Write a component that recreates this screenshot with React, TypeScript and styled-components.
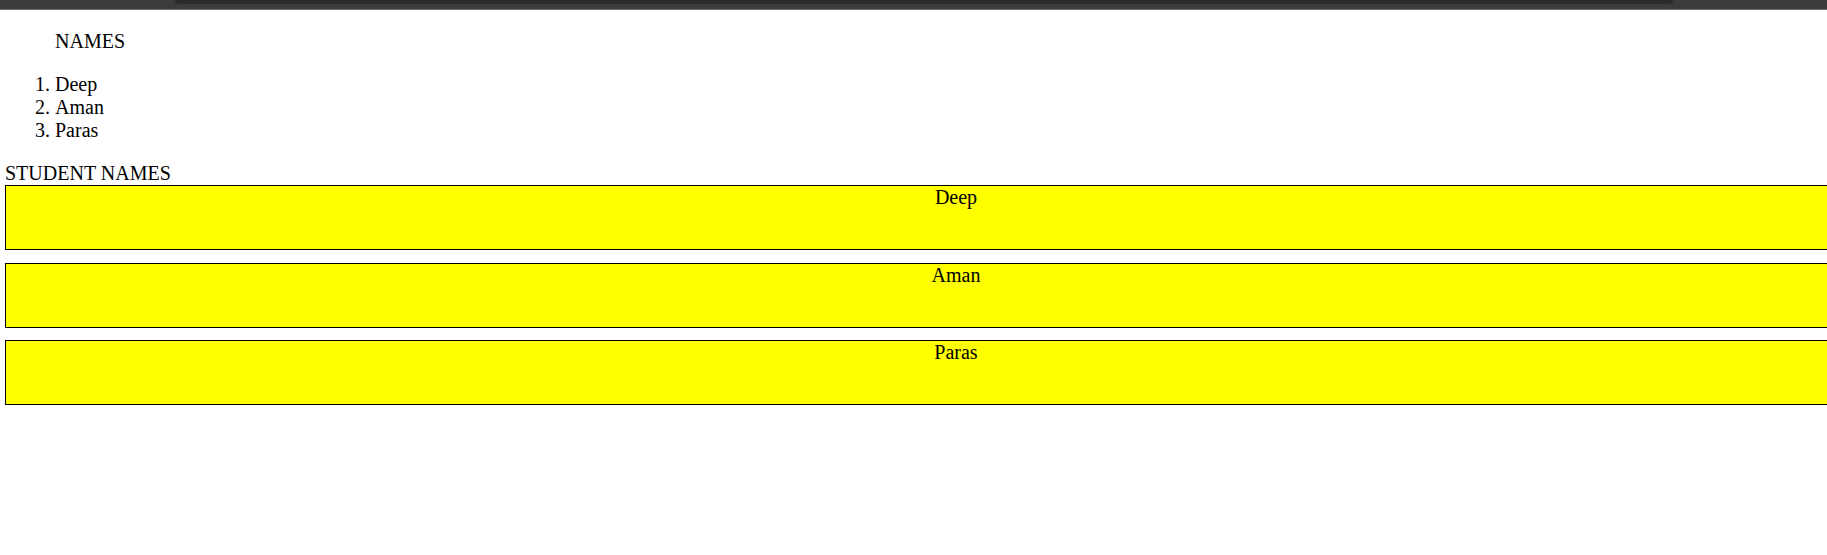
import React from "react";
import styled, { createGlobalStyle } from "styled-components";

const GlobalStyle = createGlobalStyle`
  html, body {
    margin: 0;
    padding: 0;
    background: #ffffff;
    overflow: hidden;
  }
  body {
    font-family: "Liberation Serif", "Times New Roman", serif;
    font-size: 20px;
    line-height: 23px;
    color: #000000;
  }
`;

const TopBar = styled.div`
  height: 9px;
  background: #3b3b3b;
  border-bottom: 1px solid #707070;
  display: flex;
  align-items: flex-start;
  padding-left: 175px;
`;

const TabStrip = styled.div`
  width: 1498px;
  height: 4px;
  background: #2a2a2a;
  border-radius: 0 0 6px 6px;
`;

const Page = styled.main`
  padding-left: 5px;
  width: 1902px;
`;

const Heading = styled.p`
  margin: 20px 0 0;
  padding-left: 50px;
`;

const NameList = styled.ol`
  margin: 20px 0 0;
  padding-left: 50px;
`;

const SectionTitle = styled.div`
  margin-top: 20px;
`;

const Cards = styled.div`
  display: flex;
  flex-direction: column;
  gap: 12.5px;
`;

const Card = styled.div`
  box-sizing: border-box;
  width: 1902px;
  height: 65px;
  background: #ffff00;
  border: 1px solid #000000;
  text-align: center;
`;

const names = ["Deep", "Aman", "Paras"];

export default function App() {
  return (
    <>
      <GlobalStyle />
      <TopBar>
        <TabStrip />
      </TopBar>
      <Page>
        <Heading>NAMES</Heading>
        <NameList>
          {names.map((n) => (
            <li key={n}>{n}</li>
          ))}
        </NameList>
        <SectionTitle>STUDENT NAMES</SectionTitle>
        <Cards>
          {names.map((n) => (
            <Card key={n}>{n}</Card>
          ))}
        </Cards>
      </Page>
    </>
  );
}
